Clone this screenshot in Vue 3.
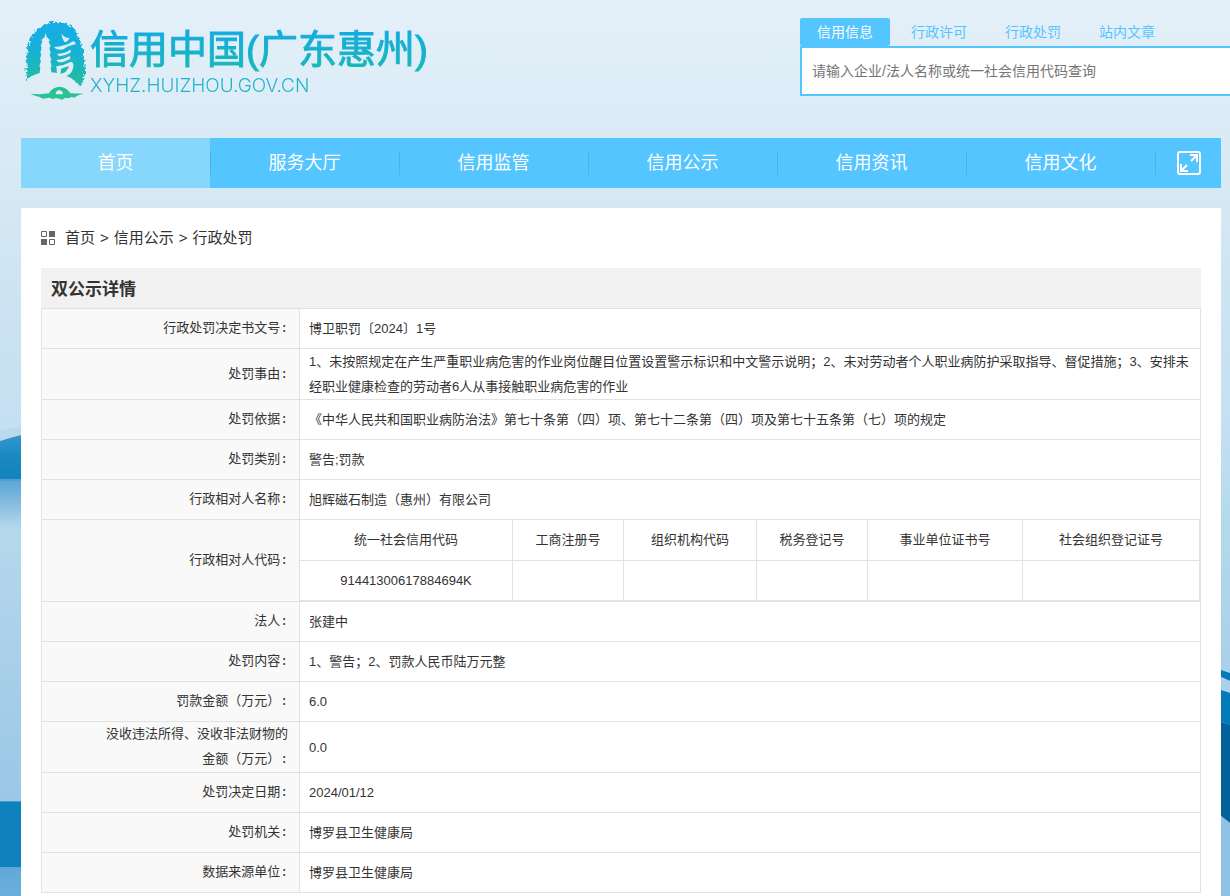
<script setup>
import { ref } from 'vue'

const tabs = ['信用信息', '行政许可', '行政处罚', '站内文章']
const activeTab = ref(0)
const keyword = ref('')

const menu = ['首页', '服务大厅', '信用监管', '信用公示', '信用资讯', '信用文化']

const codes = [
  { name: '统一社会信用代码', value: '91441300617884694K' },
  { name: '工商注册号', value: '' },
  { name: '组织机构代码', value: '' },
  { name: '税务登记号', value: '' },
  { name: '事业单位证书号', value: '' },
  { name: '社会组织登记证号', value: '' },
]

const rows = [
  { label: '行政处罚决定书文号:', value: '博卫职罚〔2024〕1号' },
  {
    label: '处罚事由:',
    value:
      '1、未按照规定在产生严重职业病危害的作业岗位醒目位置设置警示标识和中文警示说明；2、未对劳动者个人职业病防护采取指导、督促措施；3、安排未经职业健康检查的劳动者6人从事接触职业病危害的作业',
  },
  {
    label: '处罚依据:',
    value: '《中华人民共和国职业病防治法》第七十条第（四）项、第七十二条第（四）项及第七十五条第（七）项的规定',
  },
  { label: '处罚类别:', value: '警告;罚款' },
  { label: '行政相对人名称:', value: '旭辉磁石制造（惠州）有限公司' },
  { label: '行政相对人代码:', codes },
  { label: '法人:', value: '张建中' },
  { label: '处罚内容:', value: '1、警告；2、罚款人民币陆万元整' },
  { label: '罚款金额（万元）:', value: '6.0' },
  { label: '没收违法所得、没收非法财物的金额（万元）:', value: '0.0' },
  { label: '处罚决定日期:', value: '2024/01/12' },
  { label: '处罚机关:', value: '博罗县卫生健康局' },
  { label: '数据来源单位:', value: '博罗县卫生健康局' },
]
</script>

<template>
  <div class="page">
    <svg class="scene scene-left" viewBox="0 0 21 896" aria-hidden="true">
      <defs>
        <linearGradient id="hill" x1="0" y1="0" x2="0" y2="1">
          <stop offset="0" stop-color="#3596cd" />
          <stop offset="0.5" stop-color="#1a88c3" />
          <stop offset="1" stop-color="#1382be" />
        </linearGradient>
        <linearGradient id="lake" x1="0" y1="0" x2="0" y2="1">
          <stop offset="0" stop-color="#5ca6d7" />
          <stop offset="0.06" stop-color="#7fb9df" />
          <stop offset="0.15" stop-color="#b5d9ec" />
          <stop offset="0.5" stop-color="#abd0ea" />
          <stop offset="1" stop-color="#9ac8e6" />
        </linearGradient>
        <linearGradient id="shore" x1="0" y1="0" x2="0" y2="1">
          <stop offset="0" stop-color="#5fa9d7" />
          <stop offset="1" stop-color="#6bb0dc" />
        </linearGradient>
      </defs>
      <path d="M0 430L21 427V440H0z" fill="#b8daec" />
      <path d="M0 441Q10 438 21 435V479H0z" fill="url(#hill)" />
      <rect y="479" width="21" height="2" fill="#4f9fd0" />
      <rect y="481" width="21" height="320" fill="url(#lake)" />
      <rect y="801" width="21" height="66" fill="#0f82be" />
      <rect y="801" width="21" height="1" fill="#3c99ca" />
      <rect y="867" width="21" height="29" fill="url(#shore)" />
    </svg>
    <svg class="scene scene-right" viewBox="0 0 9 896" aria-hidden="true">
      <path d="M0 670L9 673V681L0 677z" fill="#0779b7" />
      <path d="M0 677L9 681V693L0 690z" fill="#a9d1ea" />
      <path d="M0 690L9 693V725L0 722z" fill="#047ab8" />
      <path d="M0 722L9 725V823L0 816z" fill="#026299" />
      <path d="M0 816L9 823V896H0z" fill="#90c2e4" />
    </svg>

    <header class="head">
      <a class="brand" href="#">
        <svg class="emblem" viewBox="0 0 240 285" aria-hidden="true">
          <defs>
            <linearGradient id="ink" gradientUnits="userSpaceOnUse" x1="0" y1="20" x2="0" y2="255">
              <stop offset="0" stop-color="#12ade8" />
              <stop offset="0.35" stop-color="#18b0d8" />
              <stop offset="0.7" stop-color="#20bba9" />
              <stop offset="1" stop-color="#2fc48d" />
            </linearGradient>
            <filter id="rough" x="-10%" y="-10%" width="120%" height="120%">
              <feTurbulence type="fractalNoise" baseFrequency="0.12" numOctaves="3" seed="4" />
              <feDisplacementMap in="SourceGraphic" scale="22" xChannelSelector="R" yChannelSelector="G" />
            </filter>
          </defs>
          <path
            d="M36 210Q33 165 34 120Q40 55 82 33Q120 10 158 28Q196 50 204 110L211 175Q208 205 196 212Q165 184 110 178Q70 178 36 210z"
            fill="url(#ink)"
            filter="url(#rough)"
          />
          <g fill="#dfedf7">
            <path d="M92 53L95 66L105 76L101 80L107 94L103 99L107 114L104 119L109 134L106 139L110 154L107 158L111 180H73L76 158L73 153L78 138L75 133L79 118L76 113L80 98L77 93L82 79L79 75L89 66z" />
            <path d="M139 55Q146 69 163 69Q159 82 148 81Q141 72 139 55z" />
            <path d="M117 96Q150 95 174 79Q184 81 181 88Q156 93 146 103Q125 107 117 96z" />
            <path d="M126 117Q149 115 166 104Q171 109 165 114Q148 123 133 124z" />
            <path d="M124 135Q146 134 164 123Q169 128 164 133Q146 143 130 142z" />
            <path fill-rule="evenodd" d="M124 154Q150 150 168 140Q179 143 174 160Q170 178 156 182Q140 190 127 186zM138 161L137 176Q155 175 162 154Q150 157 138 161z" />
            <path d="M36 192Q85 158 145 180Q178 188 190 214Q160 216 126 216Q65 222 30 226z" />
          </g>
          <path
            fill="url(#ink)"
            d="M46 236L74 238L102 235Q110 217 134 215Q158 218 166 235L206 236L190 241L178 248L170 246L160 250L150 248L142 254L124 249L112 252L104 248L84 251L72 245L62 243z"
          />
          <path d="M122 238Q122 227 133 226Q144 227 144 238z" fill="#dfedf7" />
        </svg>
        <span class="names">
          <span class="site">信用中国(广东惠州)</span>
          <span class="domain">XYHZ.HUIZHOU.GOV.CN</span>
        </span>
      </a>

      <form class="search" @submit.prevent>
        <div class="tabs">
          <button
            v-for="(tab, i) in tabs"
            :key="tab"
            type="button"
            class="tab"
            :class="{ active: i === activeTab }"
            @click="activeTab = i"
          >{{ tab }}</button>
        </div>
        <input
          v-model="keyword"
          class="keyword"
          type="text"
          aria-label="搜索"
          placeholder="请输入企业/法人名称或统一社会信用代码查询"
        />
      </form>
    </header>

    <nav class="nav">
      <a v-for="(item, i) in menu" :key="item" href="#" class="nav-item" :class="{ current: i === 0 }">{{ item }}</a>
      <button type="button" class="expand" aria-label="展开">
        <svg width="24" height="24" viewBox="0 0 24 24" fill="none" stroke="#fff" stroke-width="2">
          <rect x="1" y="1" width="22" height="22" rx="2" />
          <path d="M13 4H20V11M20 4L14 10" />
          <path d="M4 13V20H11M4 20L10 14" />
        </svg>
      </button>
    </nav>

    <main class="panel">
      <div class="crumbs">
        <svg class="grid-icon" width="14" height="14" viewBox="0 0 14 14" aria-hidden="true">
          <path d="M8 0h6v6H8zM0 8h6v6H0z" fill="#666" />
          <path d="M.5.5h5v5h-5zM8.5 8.5h5v5h-5z" fill="none" stroke="#666" />
        </svg>
        <a href="#">首页</a>
        <span>&gt;</span>
        <a href="#">信用公示</a>
        <span>&gt;</span>
        <a href="#">行政处罚</a>
      </div>

      <h1 class="title">双公示详情</h1>
      <table class="detail">
        <colgroup>
          <col class="label-col" />
          <col />
        </colgroup>
        <tbody>
          <tr v-for="row in rows" :key="row.label">
            <th scope="row">{{ row.label }}</th>
            <td v-if="row.codes" class="nest">
              <table class="codes">
                <thead>
                  <tr>
                    <th v-for="c in row.codes" :key="c.name" scope="col">{{ c.name }}</th>
                  </tr>
                </thead>
                <tbody>
                  <tr>
                    <td v-for="c in row.codes" :key="c.name">{{ c.value }}</td>
                  </tr>
                </tbody>
              </table>
            </td>
            <td v-else>{{ row.value }}</td>
          </tr>
        </tbody>
      </table>
    </main>
  </div>
</template>

<style>
body {
  margin: 0;
}
</style>

<style scoped>
.page {
  position: relative;
  display: flex;
  flex-direction: column;
  box-sizing: border-box;
  min-height: 100vh;
  padding: 0 9px 0 21px;
  overflow: hidden;
  font-family: "Liberation Sans", "Noto Sans CJK SC", sans-serif;
  color: #333;
  background: linear-gradient(#e4f0f9 0, #dbebf6 130px, #d5e9f3 200px, #cce3f2 300px, #c5e0f2 420px, #b5d9ec 520px, #abd1ea 650px, #9ac8e6 896px);
}

.page *,
.page *::before {
  box-sizing: border-box;
}

a {
  color: inherit;
  text-decoration: none;
}

button,
input {
  font-family: inherit;
}

.scene {
  position: absolute;
  top: 0;
  height: 896px;
}

.scene-left {
  left: 0;
  width: 21px;
}

.scene-right {
  right: 0;
  width: 9px;
}

.head {
  display: flex;
  justify-content: space-between;
  align-items: flex-start;
  height: 138px;
  margin-right: -9px;
}

.brand {
  display: flex;
  margin-left: -6px;
  padding-top: 15px;
}

.emblem {
  width: 80px;
  height: 95px;
}

.names {
  display: flex;
  flex-direction: column;
  align-items: flex-start;
  margin-left: -5px;
  padding-top: 11px;
}

.site,
.domain {
  color: transparent;
  background: linear-gradient(#10aae4, #1ab9b4);
  background-clip: text;
  -webkit-background-clip: text;
}

.site {
  font-size: 39px;
  font-weight: 400;
  line-height: 48px;
  -webkit-text-stroke: 1px transparent;
}

.domain {
  font-family: Inter, "Liberation Sans", sans-serif;
  font-size: 19px;
  font-weight: 300;
  line-height: 24px;
  background-image: linear-gradient(#19b2d2, #1cb8bf);
}

.search {
  width: 430px;
  padding-top: 18px;
}

.tabs {
  display: flex;
  gap: 4px;
}

.tab {
  width: 90px;
  height: 28px;
  padding: 0;
  border: 0;
  border-radius: 2px;
  background: none;
  color: #54c5ff;
  font-size: 14px;
  line-height: 28px;
}

.tab.active {
  background: #54c5ff;
  color: #fff;
}

.keyword {
  display: block;
  width: 100%;
  height: 50px;
  padding: 0 10px;
  border: 2px solid #54c5ff;
  border-right: 0;
  border-radius: 0;
  outline: 0;
  background: #fff;
  font-size: 14px;
}

.keyword::placeholder {
  color: #757575;
}

.nav {
  position: relative;
  display: flex;
  height: 50px;
  background: #54c5ff;
}

.nav-item {
  flex: 1;
  color: #fff;
  font-size: 18px;
  line-height: 50px;
  text-align: center;
}

.nav-item.current {
  background: #87d7fd;
}

.nav-item + .nav-item,
.expand {
  background: linear-gradient(#42b5ee, #42b5ee) left center / 1px 24px no-repeat;
}

.expand {
  display: flex;
  align-items: center;
  justify-content: center;
  width: 66px;
  padding: 0 0 0 2px;
  border: 0;
}

.panel {
  position: relative;
  flex: 1;
  margin-top: 20px;
  padding: 0 20px;
  background: #fff;
}

.crumbs {
  display: flex;
  align-items: center;
  gap: 5px;
  height: 60px;
  font-size: 15px;
  line-height: 60px;
}

.grid-icon {
  margin-right: 5px;
}

.title {
  margin: 0;
  padding: 0 10px;
  background: #f1f1f1;
  font-family: "Noto Sans CJK SC", sans-serif;
  font-size: 17px;
  font-weight: 700;
  line-height: 40px;
}

.detail,
.codes {
  width: 100%;
  border-spacing: 0;
  table-layout: fixed;
}

.detail {
  border: 0 solid #e2e2e2;
  border-width: 1px 0 0 1px;
  font-size: 13px;
  line-height: 25px;
}

.label-col {
  width: 258px;
}

.detail th,
.detail td {
  height: 40px;
  padding: 0 9px;
  border: 0 solid #e2e2e2;
  border-width: 0 1px 1px 0;
  font-weight: 400;
  text-align: left;
}

.detail th {
  padding: 0 11px 0 60px;
  background: #f9f9f9;
  font-family: "Liberation Mono", "Noto Sans CJK SC", monospace;
  text-align: right;
}

.detail td.nest {
  padding: 0;
}

.detail .codes th,
.detail .codes td {
  padding: 0;
  background: #fff;
  text-align: center;
}

.detail .codes th {
  height: 41px;
}

.codes th:nth-child(1) {
  width: 213px;
}

.codes th:nth-child(2),
.codes th:nth-child(4) {
  width: 111px;
}

.codes th:nth-child(3) {
  width: 133px;
}

.codes th:nth-child(5) {
  width: 155px;
}
</style>
